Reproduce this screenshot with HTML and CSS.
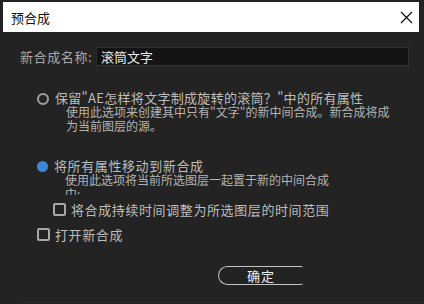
FILE: index.html
```html
<!DOCTYPE html>
<html lang="zh">
<head>
<meta charset="utf-8">
<link rel="stylesheet" href="styles.css">
</head>
<body>
<div class="dialog">
  <div class="titlebar">
    <span class="title">预合成</span>
    <svg class="close" width="13" height="13" viewBox="0 0 13 13"><path d="M1 1 L12 12 M12 1 L1 12" stroke="#111" stroke-width="1.3" fill="none"/></svg>
  </div>
  <div class="name-row">
    <span class="label">新合成名称:</span>
    <div class="input">滚筒文字</div>
  </div>
  <div class="opt opt1">
    <span class="radio"></span>
    <div class="opt-text">
      <div class="head">保留"AE怎样将文字制成旋转的滚筒？"中的所有属性</div>
      <div class="desc">使用此选项来创建其中只有"文字"的新中间合成。新合成将成为当前图层的源。</div>
    </div>
  </div>
  <div class="opt opt2">
    <span class="radio on"></span>
    <div class="opt-text">
      <div class="head">将所有属性移动到新合成</div>
      <div class="desc clip">使用此选项将当前所选图层一起置于新的中间合成中:</div>
    </div>
  </div>
  <div class="check sub">
    <span class="box"></span>
    <span class="ctext">将合成持续时间调整为所选图层的时间范围</span>
  </div>
  <div class="check main">
    <span class="box"></span>
    <span class="ctext">打开新合成</span>
  </div>
  <div class="actions">
    <div class="btn">确定</div>
  </div>
  <div class="bottom-line"></div>
</div>
</body>
</html>
```
FILE: styles.css
```css
html, body {
  margin: 0;
  padding: 0;
}
body {
  width: 424px;
  height: 304px;
  overflow: hidden;
  background: #232323;
  font-family: "Noto Sans CJK SC", "Noto Sans", sans-serif;
}
.dialog {
  position: relative;
  height: 304px;
}
.titlebar {
  margin: 2px 5px 0 3px;
  height: 30px;
  background: #fff;
  display: flex;
  align-items: center;
  justify-content: space-between;
  padding: 0 6px 0 8px;
}
.title {
  font-size: 13px;
  color: #111;
}
.close {
  display: block;
}
.name-row {
  display: flex;
  align-items: center;
  margin-top: 15px;
  padding-left: 20px;
  height: 19px;
}
.label {
  width: 76px;
  font-size: 13px;
  letter-spacing: 0.6px;
  color: #a8a8a8;
}
.input {
  width: 307px;
  height: 17px;
  background: #141414;
  border: 1px solid #333;
  border-left-color: #2a2a2a;
  color: #e8e8e8;
  font-size: 13px;
  line-height: 17px;
  padding-left: 4px;
}
.opt {
  display: flex;
  align-items: flex-start;
  padding-left: 37px;
}
.opt1 {
  margin-top: 25px;
}
.opt2 {
  margin-top: 26px;
}
.radio {
  width: 8px;
  height: 8px;
  border: 2px solid #a0a0a0;
  border-radius: 50%;
  margin-top: 2px;
  margin-right: 6px;
  flex: none;
}
.radio.on {
  width: 11px;
  height: 11px;
  border: none;
  margin-top: 2px;
  background: #3c86d8;
}
.opt-text {
  width: 360px;
}
.head {
  font-size: 13px;
  line-height: 14px;
  color: #bdbdbd;
  letter-spacing: 0.3px;
}
.opt2 .head {
  letter-spacing: 0.6px;
}
.desc {
  margin-left: 11px;
  font-size: 12px;
  line-height: 14px;
  color: #b4b4b4;
  width: 330px;
}
.desc.clip {
  width: 270px;
  height: 22px;
  overflow: hidden;
}
.check {
  display: flex;
  align-items: center;
  height: 14px;
}
.check.sub {
  margin-top: 7px;
  padding-left: 53px;
}
.check.main {
  margin-top: 11px;
  padding-left: 37px;
}
.box {
  width: 9px;
  height: 9px;
  border: 2px solid #a8a8a8;
  border-radius: 2px;
  margin-right: 5px;
  flex: none;
}
.ctext {
  font-size: 13px;
  color: #bdbdbd;
  letter-spacing: 0.6px;
}
.actions {
  display: flex;
  padding-left: 218px;
  margin-top: 25px;
}
.btn {
  width: 84px;
  height: 17px;
  border: 1.5px solid #c4c4c4;
  border-right: none;
  border-radius: 10px 2px 2px 10px;
  color: #f0f0f0;
  font-size: 13px;
  line-height: 17px;
  text-align: center;
  letter-spacing: 1px;
}
.bottom-line {
  position: absolute;
  left: 20px;
  right: 0;
  bottom: 3px;
  height: 1px;
  background: #2c2c2c;
}
```
